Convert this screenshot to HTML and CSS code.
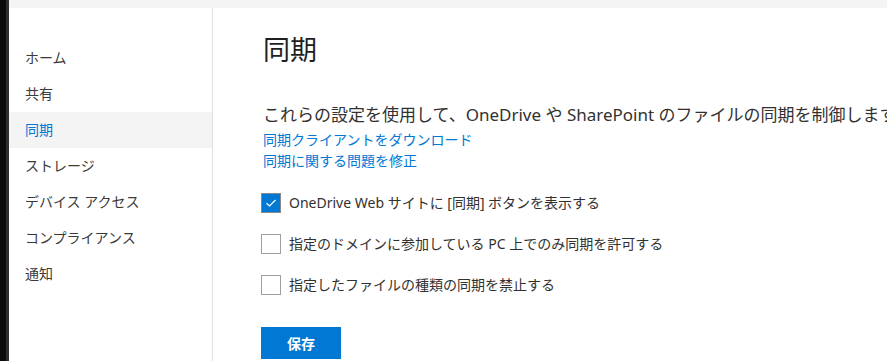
FILE: index.html
```html
<!DOCTYPE html>
<html lang="ja">
<head>
<meta charset="utf-8">
<link rel="stylesheet" href="styles.css">
</head>
<body>
<div class="frame">
  <div class="edge"><div class="edge-a"></div><div class="edge-b"></div></div>
  <div class="app">
    <div class="topbar"></div>
    <div class="body">
      <nav class="sidebar">
        <div class="nav-item">ホーム</div>
        <div class="nav-item">共有</div>
        <div class="nav-item active">同期</div>
        <div class="nav-item">ストレージ</div>
        <div class="nav-item">デバイス アクセス</div>
        <div class="nav-item">コンプライアンス</div>
        <div class="nav-item">通知</div>
      </nav>
      <main class="main">
        <h1 class="title">同期</h1>
        <p class="desc">これらの設定を使用して、OneDrive や SharePoint のファイルの同期を制御します。</p>
        <div class="links">
          <a class="link" href="#">同期クライアントをダウンロード</a>
          <a class="link" href="#">同期に関する問題を修正</a>
        </div>
        <div class="options">
          <label class="option">
            <span class="box checked">
              <svg width="12" height="10" viewBox="0 0 12 10"><path d="M1.5 5.2 L4.5 8 L10.5 2" fill="none" stroke="#fff" stroke-width="1.2"/></svg>
            </span>
            <span class="opt-text">OneDrive Web サイトに [同期] ボタンを表示する</span>
          </label>
          <label class="option">
            <span class="box"></span>
            <span class="opt-text">指定のドメインに参加している PC 上でのみ同期を許可する</span>
          </label>
          <label class="option">
            <span class="box"></span>
            <span class="opt-text">指定したファイルの種類の同期を禁止する</span>
          </label>
        </div>
        <button class="save">保存</button>
      </main>
    </div>
  </div>
</div>
</body>
</html>
```

FILE: styles.css
```css
* { box-sizing: border-box; }
html, body { margin: 0; padding: 0; }
body {
  width: 887px;
  height: 361px;
  overflow: hidden;
  background: #fff;
  font-family: "Noto Sans", "Noto Sans CJK JP", sans-serif;
  color: #323130;
}
.frame { display: flex; height: 361px; }
.edge { display: flex; width: 9px; flex: none; }
.edge-a { width: 6px; background: #0b0b0b; }
.edge-b { width: 3px; background: #2e2e2e; }
.app { flex: 1; display: flex; flex-direction: column; min-width: 0; }
.topbar { height: 8px; background: #f4f4f4; flex: none; }
.body { flex: 1; display: flex; min-height: 0; }
.sidebar {
  width: 204px;
  flex: none;
  border-right: 1px solid #e1e1e1;
  padding-top: 32px;
}
.nav-item {
  height: 36px;
  line-height: 36px;
  padding-left: 16px;
  font-size: 14px;
  color: #3b3a39;
}
.nav-item.active { background: #f4f4f4; color: #0078d4; }
.main {
  flex: 1;
  padding: 24px 0 0 50px;
  min-width: 0;
  white-space: nowrap;
  overflow: hidden;
}
.title {
  margin: 0;
  font-size: 27px;
  font-weight: 400;
  line-height: 36px;
  color: #201f1e;
}
.desc {
  margin: 36px 0 0;
  font-size: 17px;
  line-height: 22px;
}
.links { margin-top: 3px; display: flex; flex-direction: column; }
.link {
  font-size: 14px;
  line-height: 21px;
  color: #0078d4;
  text-decoration: none;
}
.options {
  margin-top: 22px;
  margin-left: -2px;
  display: flex;
  flex-direction: column;
  gap: 21px;
}
.option { display: flex; align-items: center; gap: 8px; height: 20px; }
.box {
  width: 20px; height: 20px;
  border: 1px solid #a19f9d;
  background: #fff;
  display: flex; align-items: center; justify-content: center;
  flex: none;
}
.box.checked { background: #0078d4; border-color: #8a8886; }
.opt-text { font-size: 14px; line-height: 20px; }
.save {
  margin-top: 32px;
  margin-left: -2px;
  width: 80px;
  height: 32px;
  border: none;
  background: #0078d4;
  color: #fff;
  font-family: "Noto Sans", "Noto Sans CJK JP", sans-serif;
  font-size: 14px;
  font-weight: 700;
  padding: 0;
}
```
